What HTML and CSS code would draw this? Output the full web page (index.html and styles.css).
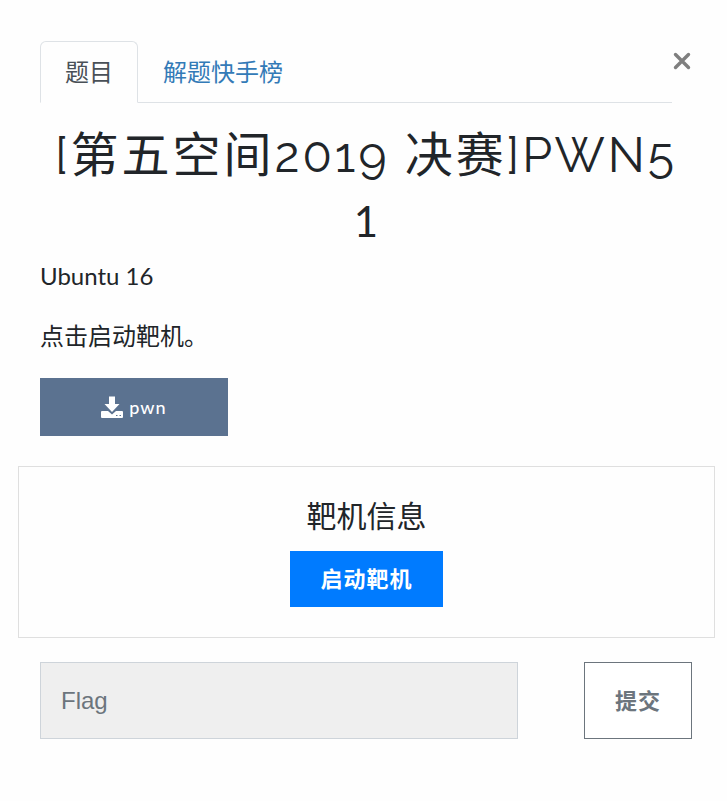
FILE: index.html
```html
<!DOCTYPE html>
<html lang="zh-CN">
<head>
    <meta charset="UTF-8">
    <meta name="viewport" content="width=device-width, initial-scale=1.0">
    <title>[第五空间2019 决赛]PWN5</title>
    <link rel="stylesheet" href="styles.css">
</head>
<body>
    <main class="challenge">
        <header class="challenge-header">
            <nav class="tabs">
                <a class="tab active" href="#challenge">题目</a>
                <a class="tab" href="#solves">解题快手榜</a>
            </nav>
            <button class="close" type="button" aria-label="关闭">
                <svg width="20" height="20" viewBox="0 0 20 20" fill="none" stroke="currentColor" stroke-width="3.4" stroke-linecap="round" aria-hidden="true">
                    <path d="M3.500 3.500L16.500 16.500M16.500 3.500L3.500 16.500"/>
                </svg>
            </button>
        </header>

        <section id="challenge">
            <h1 class="challenge-name">[第五空间2019 决赛]PWN5</h1>
            <h2 class="challenge-value">1</h2>

            <div class="description">
                <p>Ubuntu 16</p>
                <p>点击启动靶机。</p>
            </div>

            <a class="download" href="#pwn">
                <svg width="22" height="22" viewBox="0 0 22 22" fill="currentColor" aria-hidden="true">
                    <path d="M8 0.500h6v7.500h4.500L11 16 3.500 8H8z"/>
                    <path fill-rule="evenodd" d="M1 15h6l4 3.500 4-3.500h6q1 0 1 1v5q0 1-1 1H1q-1 0-1-1v-5q0-1 1-1zM15 19v1h1.500v-1zM18.500 19v1H20v-1z"/>
                </svg>
                <span>pwn</span>
            </a>

            <div class="instance">
                <h5>靶机信息</h5>
                <button class="btn-start" type="button">启动靶机</button>
            </div>

            <form class="submit-row">
                <input class="flag-input" type="text" name="flag" placeholder="Flag" aria-label="Flag">
                <button class="btn-submit" type="submit">提交</button>
            </form>
        </section>
    </main>
</body>
</html>
```

FILE: styles.css
```css
* {
    margin: 0;
    padding: 0;
    box-sizing: border-box;
}

body {
    font-family: Lato, "Noto Sans CJK SC", sans-serif;
    font-size: 24px;
    line-height: 36px;
    color: #212529;
    background: #fefefe;
}

.challenge {
    padding: 41px 35px 40px 40px;
}

.challenge-header {
    display: flex;
    align-items: flex-start;
}

.tabs {
    flex: 1;
    display: flex;
    border-bottom: 1px solid #dee2e6;
}

.tab {
    padding: 12px 24px;
    margin-bottom: -1px;
    border: 1px solid transparent;
    border-radius: 6px 6px 0 0;
    color: #337ab7;
    text-decoration: none;
}

.tab.active {
    color: #495057;
    background: #fefefe;
    border-color: #dee2e6 #dee2e6 #fefefe;
}

.close {
    display: flex;
    margin-top: 10px;
    border: 0;
    background: none;
    color: #7f7f7f;
    cursor: pointer;
}

.challenge-name,
.challenge-value {
    text-align: center;
    font-weight: 400;
}

.challenge-name {
    margin-top: 16px;
    font-family: Raleway, Lato, "Noto Sans CJK SC", sans-serif;
    font-size: 48px;
    line-height: 72px;
    letter-spacing: 3px;
}

.challenge-value {
    margin-top: 2px;
    font-size: 42px;
    line-height: 56px;
}

.description {
    margin-top: 9px;
}

.description p {
    margin-bottom: 24px;
}

.download {
    display: flex;
    align-items: center;
    justify-content: center;
    gap: 6px;
    width: 188px;
    height: 58px;
    background: #5b7290;
    color: #fff;
    font-size: 18px;
    font-weight: 500;
    letter-spacing: 1px;
    text-decoration: none;
}

.instance {
    margin: 30px -23px 24px -22px;
    padding: 30px;
    border: 1px solid #dfdfdf;
    text-align: center;
}

.instance h5 {
    margin-bottom: 18px;
    font-size: 30px;
    font-weight: 400;
}

.btn-start,
.btn-submit {
    font-family: inherit;
    font-size: 22px;
    font-weight: 700;
    letter-spacing: 1px;
    cursor: pointer;
}

.btn-start {
    padding: 10px 30px;
    border: 0;
    background: #007bff;
    color: #fff;
    line-height: 36px;
}

.submit-row {
    display: flex;
    justify-content: space-between;
    gap: 24px;
}

.flag-input {
    flex: 0 1 478px;
    min-width: 0;
    padding: 20px;
    border: 1px solid #ced4da;
    background: #efefef;
    color: #495057;
    font-family: "Liberation Sans", Arial, sans-serif;
    font-size: 24px;
    line-height: 35px;
}

.flag-input::placeholder {
    color: #6c757d;
}

.btn-submit {
    padding: 20px 30px;
    border: 1px solid #6c757d;
    background: #fff;
    color: #6c757d;
    line-height: 35px;
}
```
